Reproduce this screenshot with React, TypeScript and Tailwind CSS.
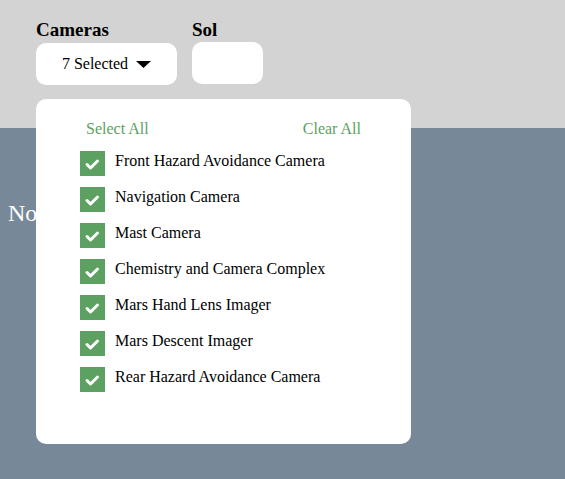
import React from "react";

const cameras = [
  "Front Hazard Avoidance Camera",
  "Navigation Camera",
  "Mast Camera",
  "Chemistry and Camera Complex",
  "Mars Hand Lens Imager",
  "Mars Descent Imager",
  "Rear Hazard Avoidance Camera",
];

function Check() {
  return (
    <span className="w-[25px] h-[25px] bg-[#5da162] flex items-center justify-center shrink-0">
      <svg width="25" height="25" viewBox="0 0 25 25">
        <path d="M7 13.5 L10.5 17 L17.5 10" fill="none" stroke="#fff" strokeWidth="3" strokeLinecap="round" strokeLinejoin="round" />
      </svg>
    </span>
  );
}

export default function App() {
  return (
    <div className="relative min-h-[479px] bg-[#778899] font-['Liberation_Serif',serif] text-black">
      <div className="h-[128px] bg-[#d3d3d3] pt-[20px] pl-[36px] flex gap-[15px]">
        <div className="flex flex-col">
          <span className="text-[19px] font-bold leading-[20px]">Cameras</span>
          <button className="mt-[3px] w-[141px] h-[42px] bg-white rounded-[10px] flex items-center justify-center gap-[8px] text-[16px] leading-[18px]">
            <span>7 Selected</span>
            <svg width="15" height="7" viewBox="0 0 15 7">
              <path d="M0 0 L15 0 L7.5 7 Z" fill="#000" />
            </svg>
          </button>
        </div>
        <div className="flex flex-col">
          <span className="text-[19px] font-bold leading-[20px]">Sol</span>
          <div className="mt-[2px] w-[71px] h-[42px] bg-white rounded-[10px]" />
        </div>
      </div>
      <p className="pt-[71px] pl-[8px] text-[24px] text-white leading-[28px]">No photos found</p>
      <div className="absolute left-[36px] top-[99px] w-[375px] h-[345px] bg-white rounded-[10px]">
        <div className="flex justify-between px-[50px] pt-[21px] text-[16px] text-[#5da162] leading-[18px]">
          <span>Select All</span>
          <span>Clear All</span>
        </div>
        <div className="mt-[13px] pl-[44px] flex flex-col gap-[11px]">
          {cameras.map((c) => (
            <div key={c} className="flex items-start gap-[10px]">
              <Check />
              <span className="pt-[1px] text-[16px] leading-[18px]">{c}</span>
            </div>
          ))}
        </div>
      </div>
    </div>
  );
}
